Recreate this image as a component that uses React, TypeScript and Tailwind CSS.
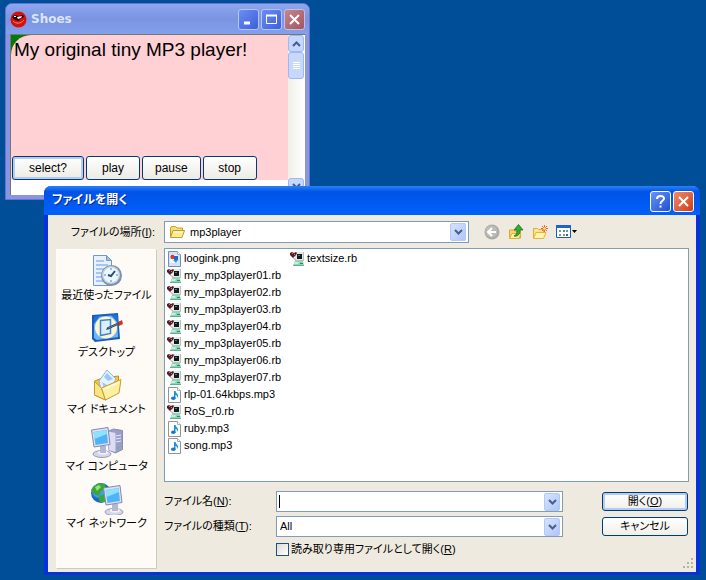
import React from 'react';

const uiFont =
  "font-['Liberation_Sans','Noto_Sans_CJK_JP',sans-serif] [font-feature-settings:'palt'] text-[11px] leading-[17px] text-black";

type FileKind = 'png' | 'rb' | 'mp3';

const files: { name: string; kind: FileKind }[] = [
  { name: 'loogink.png', kind: 'png' },
  { name: 'my_mp3player01.rb', kind: 'rb' },
  { name: 'my_mp3player02.rb', kind: 'rb' },
  { name: 'my_mp3player03.rb', kind: 'rb' },
  { name: 'my_mp3player04.rb', kind: 'rb' },
  { name: 'my_mp3player05.rb', kind: 'rb' },
  { name: 'my_mp3player06.rb', kind: 'rb' },
  { name: 'my_mp3player07.rb', kind: 'rb' },
  { name: 'rlp-01.64kbps.mp3', kind: 'mp3' },
  { name: 'RoS_r0.rb', kind: 'rb' },
  { name: 'ruby.mp3', kind: 'mp3' },
  { name: 'song.mp3', kind: 'mp3' },
  { name: 'textsize.rb', kind: 'rb' },
];

function FileIcon({ kind }: { kind: FileKind }) {
  if (kind === 'rb') {
    return (
      <svg width="16" height="16" viewBox="0 0 16 16" className="shrink-0" aria-hidden="true">
        <path d="M5 1h9v9H5z" fill="#e4e9e8" />
        <path d="M7 3h5v5H7z" fill="#101c1c" />
        <path d="M8 4h2v1H8z" fill="#5d7472" />
        <path d="M13 1h1v9h-1zM5 9h9v1H5z" fill="#b4c2bf" />
        <path d="M5 10h8l1 5H3z" fill="#8ed3b3" />
        <path d="M5 11h4l-1 2H4z" fill="#c9eedd" />
        <path d="M10 12h3v1h-3z" fill="#2c8a66" />
        <path d="M3 14h11v1H3z" fill="#5fb48f" />
        <path d="M0 2l2-1 2 1 2-1 1 1-1 2-3 3-3-3z" fill="#5b1c24" />
        <path d="M2 2h1v1H2zM4 3h1v1H4z" fill="#b98589" />
        <path d="M3 7h1l2 2H5z" fill="#8d9a9a" />
      </svg>
    );
  }
  return (
    <svg width="16" height="16" viewBox="0 0 16 16" className="shrink-0" aria-hidden="true">
      <path d="M1.500 .5h9l3 3v12h-12z" fill={kind === 'png' ? '#cfe3fb' : '#fdfdfd'} stroke={kind === 'png' ? '#6f8fb8' : '#8e959c'} />
      <path d="M10.500 .5v3h3" fill="#fff" stroke="#a4adb8" />
      {kind === 'png' ? (
        <>
          <path d="M3 4h8v8H3z" fill="#f3f8ff" />
          <circle cx="5.500" cy="6" r="2.200" fill="#e0362c" />
          <path d="M7 5h4v4H7z" fill="#2a63d8" />
          <path d="M6 9h5l-2 3z" fill="#23a0d0" />
        </>
      ) : (
        <>
          <path d="M7 4h1.500c0 2 2.500 2.500 2.500 4.500 0 1-.5 2-1.200 2.500.4-1.500.2-2.500-1.300-3.200V11H7z" fill="#1c8fe0" />
          <ellipse cx="6.300" cy="11.200" rx="2.300" ry="1.800" fill="#1878c8" />
        </>
      )}
    </svg>
  );
}

function FolderIcon() {
  return (
    <svg width="16" height="16" viewBox="0 0 16 16" aria-hidden="true">
      <path d="M1.500 13V4l1-1.500h4L8 4h5.500v3" fill="#f9de70" stroke="#c79a2a" />
      <path d="M1.500 13.500L4 6.500h11.500l-2.500 7z" fill="#fdec9a" stroke="#c79a2a" />
      <path d="M5 8h8.500" stroke="#fffbe0" />
    </svg>
  );
}

function Chevron() {
  return (
    <span
      aria-hidden="true"
      className="pointer-events-none flex h-[18px] w-4 items-center justify-center rounded-[2px] border border-[#b4c8f6] bg-linear-to-br from-[#d6e3ff] to-[#b0c6f8]"
    >
      <svg width="9" height="6" viewBox="0 0 9 6">
        <path d="M1 1l3.500 3.500L8 1" fill="none" stroke="#44608f" strokeWidth="2" />
      </svg>
    </span>
  );
}

function RecentIcon() {
  return (
    <svg width="32" height="32" viewBox="0 0 32 32" aria-hidden="true">
      <path d="M2.500 .5h13l5 5v25h-18z" fill="#e8f1ff" stroke="#6f97d4" />
      <path d="M15.500 .5v5h5z" fill="#9fbfec" stroke="#6f97d4" />
      <path d="M5 6h8M5 10h12M5 14h8M5 18h6M5 22h6M5 26h8" stroke="#a9c4f0" strokeWidth="2" />
      <circle cx="20.500" cy="20.500" r="10.500" fill="#7f92aa" />
      <circle cx="20" cy="20" r="9" fill="#c6d3e2" />
      <circle cx="20" cy="20" r="7.500" fill="#e9f7ff" />
      <path d="M20 13v2M20 25v2M13 20h2M25 20h2" stroke="#5b7fae" />
      <path d="M24 16l-4 5-3-1" fill="none" stroke="#2d4b78" strokeWidth="2" />
    </svg>
  );
}

function DesktopIcon() {
  return (
    <svg width="32" height="32" viewBox="0 0 32 32" aria-hidden="true">
      <path d="M1 3l26-2 2 26-25 3-3-3z" fill="#1a5cc0" />
      <path d="M3 5l23-2 1 22-21 3-3-2z" fill="#6fb6f4" />
      <path d="M3 5l6-1-6 8zM20 3l6 0 1 8z" fill="#1f6fd6" />
      <ellipse cx="15" cy="15.500" rx="11" ry="11" fill="#fff6cf" />
      <path d="M9.500 8.500l10-1v14l-10 2z" fill="#dceeff" stroke="#3b84d8" strokeWidth="1.500" />
      <path d="M16 16l11-5 1 1-11 5z" fill="#8fb0d8" stroke="#2b4568" />
      <path d="M27 10l4-2 1 4-4 2z" fill="#c23b22" />
      <path d="M16 16l-1 2 3-1z" fill="#1d3558" />
    </svg>
  );
}

function DocumentsIcon() {
  return (
    <svg width="32" height="32" viewBox="0 0 32 32" aria-hidden="true">
      <path d="M3.500 12l8-3 16-2v14l-13 10-11-5z" fill="#f2c83e" stroke="#c0921f" />
      <path d="M8 12L16 1l9 9-6 11-8 4z" fill="#e5f3ff" stroke="#88b4e4" />
      <path d="M16 4l6 6-5 2-4-4zM11 13l5 3-3 4z" fill="#9cc9f4" />
      <path d="M3.500 12.500l7 6.500 4 12-11-5z" fill="#fbe388" stroke="#cb9c25" />
      <path d="M10.500 19L30 10.500 28 24l-13.500 7z" fill="#fdf0a4" stroke="#cb9c25" />
      <path d="M12 20.500l16-7" stroke="#fffbdc" strokeWidth="1.500" />
    </svg>
  );
}

function Monitor() {
  return (
    <>
      <ellipse cx="12" cy="28" rx="9" ry="3.500" fill="#d4d6ea" stroke="#9799bc" />
      <ellipse cx="13" cy="26.500" rx="5" ry="2" fill="#f0f1fb" />
      <path d="M10 20h6v7h-6z" fill="#b4b6d4" />
      <path d="M1.500 4L18 1.500l2 17L4 21z" fill="#dfe0f0" stroke="#8688ae" />
      <path d="M3.500 6L16.500 4 18 17 5.500 19z" fill="#4fb4f6" />
      <path d="M3.500 6L16.500 4l.5 4-12.500 5z" fill="#8ee0ff" />
    </>
  );
}

function ComputerIcon() {
  return (
    <svg width="34" height="32" viewBox="0 0 34 32" aria-hidden="true">
      <path d="M18.500 5l5-2 9 1.500v19l-7 3.500-7-3z" fill="#9c9ec8" stroke="#8a8cb6" />
      <path d="M18.500 5.500l7 1.500v19l-7-2z" fill="#dcddf2" />
      <path d="M26 10l5-1M26 13l5-1M26 16l5-1" stroke="#e7e8f8" />
      <path d="M27 21h2v2h-2z" fill="#58c85c" />
      <Monitor />
    </svg>
  );
}

function NetworkIcon() {
  return (
    <svg width="34" height="32" viewBox="0 0 34 32" aria-hidden="true">
      <circle cx="11" cy="10" r="10" fill="#1c67cc" />
      <circle cx="9" cy="8" r="7" fill="#3f9df0" />
      <path d="M3 4l6-4 6 1 1 5-5 2-2 5-5-2-3-4zM8 14l6-3 5 2-2 6-7 0z" fill="#38a836" />
      <path d="M5 4l4-2 2 2-4 4z" fill="#9be26e" />
      <g transform="translate(12 1)">
        <Monitor />
      </g>
    </svg>
  );
}

const places = [
  { label: '最近使ったファイル', icon: <RecentIcon /> },
  { label: 'デスクトップ', icon: <DesktopIcon /> },
  { label: 'マイ ドキュメント', icon: <DocumentsIcon /> },
  { label: 'マイ コンピュータ', icon: <ComputerIcon /> },
  { label: 'マイ ネットワーク', icon: <NetworkIcon /> },
];

function ShoesButton({ children, focused = false }: { children: string; focused?: boolean }) {
  return (
    <button
      type="button"
      className={`h-6 rounded-[3px] border border-[#003c74] bg-linear-to-b from-white to-[#ecebe5] text-[12px] ${
        focused ? 'w-[72px] shadow-[inset_0_0_0_2px_#b3cbf5]' : 'min-w-[54px] px-3'
      }`}
    >
      {children}
    </button>
  );
}

function CaptionButton({ label, tone, children }: { label: string; tone: string; children: React.ReactNode }) {
  return (
    <button
      type="button"
      aria-label={label}
      className={`flex h-[21px] w-[21px] items-center justify-center rounded-[3px] border ${tone}`}
    >
      <svg width="15" height="15" viewBox="0 0 15 15" fill="none" stroke="#fff" strokeWidth="2" aria-hidden="true">
        {children}
      </svg>
    </button>
  );
}

function ShoesWindow() {
  return (
    <section
      aria-label="Shoes"
      className="absolute left-[5px] top-[3px] w-[305px] rounded-t-[7px] border border-[#6673cc] bg-[#8795e2] px-1 pb-1"
    >
      <header className="-mx-1 flex h-[30px] items-center rounded-t-[6px] bg-linear-to-b from-[#8ea6ee] via-[#7b94e2] to-[#83a0ea] px-1">
        <svg width="17" height="17" viewBox="0 0 17 17" aria-hidden="true">
          <circle cx="8.500" cy="8.500" r="8" fill="#d90f0b" />
          <path d="M2 6l3-2 3 1 5-1 1 2-4 2-1 2-4-1z" fill="#1b0a08" />
          <path d="M4 5h2v1H4zM7 6l5-1-1 2-3 1z" fill="#fff" />
          <path d="M3 10c3 3 8 3 11-1" fill="none" stroke="#ff8a70" />
        </svg>
        <h1 className="ml-1 flex-1 font-['DejaVu_Sans',sans-serif] text-[12px] font-bold text-[#dce5fc]">Shoes</h1>
        <div className="flex gap-[2px]">
          <CaptionButton label="Minimize" tone="border-[#b5c4f5] bg-linear-to-br from-[#6d8df0] to-[#3c5fdc]">
            <path d="M3 11h6" strokeWidth="3" />
          </CaptionButton>
          <CaptionButton label="Maximize" tone="border-[#b5c4f5] bg-linear-to-br from-[#6d8df0] to-[#3c5fdc]">
            <path d="M2.500 3.500h10v8h-10z" strokeWidth="1" />
            <path d="M2 3.500h11" />
          </CaptionButton>
          <CaptionButton label="Close" tone="border-[#c9bfdd] bg-linear-to-br from-[#c2868f] to-[#a5555f]">
            <path d="M3 3l9 9M12 3l-9 9" />
          </CaptionButton>
        </div>
      </header>
      <div className="flex h-[161px] overflow-hidden border-l border-t border-[#77776f] bg-white pr-px">
        <div className="flex-1">
          <div className="bg-[#007a0a]">
            <div className="flex h-[145px] flex-col justify-between rounded-tl-[20px] bg-[#ffd0d4] pl-px pt-[3px]">
              <p className="whitespace-nowrap pl-[2px] font-['Liberation_Sans',sans-serif] text-[19px] leading-6">
                My original tiny MP3 player!
              </p>
              <div className="flex gap-[2px]">
                <ShoesButton focused>select?</ShoesButton>
                <ShoesButton>play</ShoesButton>
                <ShoesButton>pause</ShoesButton>
                <ShoesButton>stop</ShoesButton>
              </div>
            </div>
          </div>
        </div>
        <div className="flex w-4 flex-col bg-linear-to-r from-[#f0f0e8] to-white">
          <button
            type="button"
            aria-label="Scroll up"
            className="flex h-[17px] items-center justify-center rounded-[3px] border border-[#9db8f5] bg-[#c6d6fd]"
          >
            <svg width="9" height="6" viewBox="0 0 9 6" aria-hidden="true">
              <path d="M1 5l3.500-3.500L8 5" fill="none" stroke="#44608f" strokeWidth="2" />
            </svg>
          </button>
          <div className="flex h-[27px] flex-col items-center justify-center gap-px rounded-[3px] border border-[#9db8f5] bg-[#c8d8fd]">
            <span className="h-px w-[7px] bg-white" />
            <span className="h-px w-[7px] bg-white" />
            <span className="h-px w-[7px] bg-white" />
            <span className="h-px w-[7px] bg-white" />
          </div>
          <button
            type="button"
            aria-label="Scroll down"
            className="mt-auto flex h-[17px] items-center justify-center rounded-[3px] border border-[#9db8f5] bg-[#c6d6fd]"
          >
            <svg width="9" height="12" viewBox="0 0 9 12" aria-hidden="true">
              <path d="M1 3l3.500 3.500L8 3" fill="none" stroke="#44608f" strokeWidth="2" />
            </svg>
          </button>
        </div>
      </div>
    </section>
  );
}

function Toolbar() {
  return (
    <div className="flex items-center gap-2">
      <button type="button" aria-label="戻る">
        <svg width="16" height="16" viewBox="0 0 16 16" aria-hidden="true">
          <circle cx="8" cy="8" r="7.500" fill="#aaa9a3" />
          <circle cx="7.500" cy="7.500" r="6" fill="#bdbcb6" />
          <path d="M12 8H5M8 4L4 8l4 4" fill="none" stroke="#fff" strokeWidth="2" />
        </svg>
      </button>
      <button type="button" aria-label="上のフォルダへ">
        <svg width="16" height="16" viewBox="0 0 16 16" aria-hidden="true">
          <path d="M1.500 14V6h4l1 1h6v7z" fill="#f7d767" stroke="#d6a72c" />
          <path d="M1.500 14.500L4 9.500h9l-2 5z" fill="#fdf0a0" stroke="#dcae37" />
          <path d="M6 12c2-1 3-2 3-6H6l4.500-5.500L15 6h-3c0 4-2 7-6 6z" fill="#35ad2f" stroke="#14751a" strokeWidth=".8" />
        </svg>
      </button>
      <button type="button" aria-label="新しいフォルダの作成">
        <svg width="16" height="16" viewBox="0 0 16 16" aria-hidden="true">
          <path d="M1.500 14V4.500h4l1 1h5v3" fill="#fbe48a" stroke="#dcae37" />
          <path d="M1.500 14.500L4 8.500h10l-2.500 6z" fill="#fff3ae" stroke="#e0b440" />
          <path d="M12.500 1v7M9 4.500h7M10 2l5 5M15 2l-5 5" stroke="#ef6a28" />
          <circle cx="12.500" cy="4.500" r="1.300" fill="#ffe0b0" />
        </svg>
      </button>
      <button type="button" aria-label="表示メニュー" className="flex items-center">
        <svg width="22" height="16" viewBox="0 0 22 16" aria-hidden="true">
          <path d="M.5 1.500h14v12H.5z" fill="#fff" stroke="#1a5cba" />
          <path d="M0 1h15v3H0z" fill="#1a66cc" />
          <path d="M3 6h2v2H3zM10 6h2v2h-2z" fill="#7791b8" />
          <path d="M7 6h2v2H7z" fill="#4a9a56" />
          <path d="M3 10h2v2H3zM7 10h2v2H7z" fill="#8a8fa5" />
          <path d="M10 10h2v2h-2z" fill="#2e5dbc" />
          <path d="M16 6h5l-2.500 3z" fill="#000" />
        </svg>
      </button>
    </div>
  );
}

function DialogButton({ children, primary = false }: { children: React.ReactNode; primary?: boolean }) {
  return (
    <button
      type="button"
      className={`flex h-[19px] w-full items-center justify-center rounded-[3px] border border-[#003c74] bg-linear-to-b from-white to-[#f0efe8] ${
        primary ? 'shadow-[inset_0_0_0_2px_#b3cbf5]' : ''
      }`}
    >
      <span>{children}</span>
    </button>
  );
}

function OpenDialog() {
  return (
    <section
      role="dialog"
      aria-labelledby="dialog-title"
      className="absolute left-[44px] right-[6px] top-[186px] rounded-t-[7px] border-x-4 border-b-[3px] border-[#0831d9] bg-[#ece9d8]"
    >
      <header className="-mx-1 flex h-[29px] items-center rounded-t-[7px] bg-linear-to-b from-[#2a80f8] via-[#0053e6] via-20% to-[#0061fc] pl-2 pr-[6px]">
        <h2 id="dialog-title" className="flex-1 text-[12px] font-bold text-white [text-shadow:1px_1px_#0a2a88]">
          ファイルを開く
        </h2>
        <div className="flex gap-[2px] pt-[2px]">
          <CaptionButton label="ヘルプ" tone="border-white bg-linear-to-br from-[#6a92f5] to-[#1c4fd8]">
            <path d="M4 5c0-4 7-4 7-.5C11 7 7.500 6.500 7.500 10M7.500 11.500v2" />
          </CaptionButton>
          <CaptionButton label="閉じる" tone="border-white bg-linear-to-br from-[#ee8a68] to-[#cf3a10]">
            <path d="M3 3l9 9M12 3l-9 9" />
          </CaptionButton>
        </div>
      </header>
      <div className="grid grid-cols-[101px_minmax(0,1fr)] gap-x-[7px] bg-[#eeeadf] pb-[3px] pl-2 pr-[7px] pt-[6px]">
        <label htmlFor="look-in" className="self-center whitespace-nowrap pr-[2px] text-right">
          ファイルの場所(<u>I</u>):
        </label>
        <div className="flex items-center gap-[15px]">
          <div className="grid h-[22px] w-[305px] grid-cols-[26px_1fr_18px] items-center border border-[#7f9db9] bg-white">
            <span className="col-start-1 row-start-1 pl-1">
              <FolderIcon />
            </span>
            <select id="look-in" className="col-span-3 col-start-1 row-start-1 h-full w-full appearance-none bg-transparent pl-[25px] outline-none">
              <option>mp3player</option>
            </select>
            <span className="pointer-events-none col-start-3 row-start-1">
              <Chevron />
            </span>
          </div>
          <Toolbar />
        </div>

        <nav aria-label="場所" className="mt-[6px] border border-[#fffdf8] border-b-[#cfcabb] border-r-[#cfcabb] bg-[#fefbf6] pt-[5px]">
          <ul>
            {places.map((place) => (
              <li key={place.label}>
                <button type="button" className="flex h-[57px] w-full flex-col items-center whitespace-nowrap">
                  {place.icon}
                  <span>{place.label}</span>
                </button>
              </li>
            ))}
          </ul>
        </nav>

        <div className="mt-[5px]">
          <ul className="grid h-[234px] auto-cols-[123px] grid-flow-col grid-rows-[repeat(12,17px)] border border-[#7f9db9] bg-white pl-[2px] pt-px">
            {files.map((file) => (
              <li key={file.name}>
                <button type="button" className="flex items-center gap-px whitespace-nowrap">
                  <FileIcon kind={file.kind} />
                  {file.name}
                </button>
              </li>
            ))}
          </ul>
          <div className="mt-[9px] grid grid-cols-[112px_minmax(0,1fr)_86px] items-center gap-y-1 pr-px">
            <label htmlFor="file-name">
              ファイル名(<u>N</u>):
            </label>
            <div className="mr-[39px] grid h-[21px] grid-cols-[1fr_18px] items-center border border-[#7f9db9] bg-white">
              <span aria-hidden="true" className="col-start-1 row-start-1 ml-[2px] h-[13px] w-px bg-black" />
              <input id="file-name" type="text" className="col-start-1 row-start-1 h-full w-full bg-transparent px-1 outline-none" />
              <Chevron />
            </div>
            <DialogButton primary>
              開く(<u>O</u>)
            </DialogButton>

            <label htmlFor="file-type">
              ファイルの種類(<u>T</u>):
            </label>
            <div className="mr-[39px] grid h-[21px] grid-cols-[1fr_18px] items-center border border-[#7f9db9] bg-white">
              <select id="file-type" className="col-span-2 col-start-1 row-start-1 h-full w-full appearance-none bg-transparent pl-[3px] outline-none">
                <option>All</option>
              </select>
              <span className="pointer-events-none col-start-2 row-start-1">
                <Chevron />
              </span>
            </div>
            <DialogButton>キャンセル</DialogButton>

            <label className="col-start-2 flex items-center gap-[2px] whitespace-nowrap">
              <input
                type="checkbox"
                className="h-[13px] w-[13px] appearance-none border border-[#1c5180] bg-linear-to-br from-[#dcdcd7] to-white"
              />
              <span>
                読み取り専用ファイルとして開く(<u>R</u>)
              </span>
            </label>
          </div>
          <div className="-mr-[5px] flex justify-end">
            <svg width="12" height="11" viewBox="0 0 12 11" fill="#b8b4a2" aria-hidden="true">
              <path d="M9 0h2v2H9zM5 4h2v2H5zM9 4h2v2H9zM1 8h2v2H1zM5 8h2v2H5zM9 8h2v2H9z" />
            </svg>
          </div>
        </div>
      </div>
    </section>
  );
}

export default function App() {
  return (
    <main className={`relative min-h-screen overflow-hidden bg-[#004e98] ${uiFont}`}>
      <ShoesWindow />
      <OpenDialog />
    </main>
  );
}
